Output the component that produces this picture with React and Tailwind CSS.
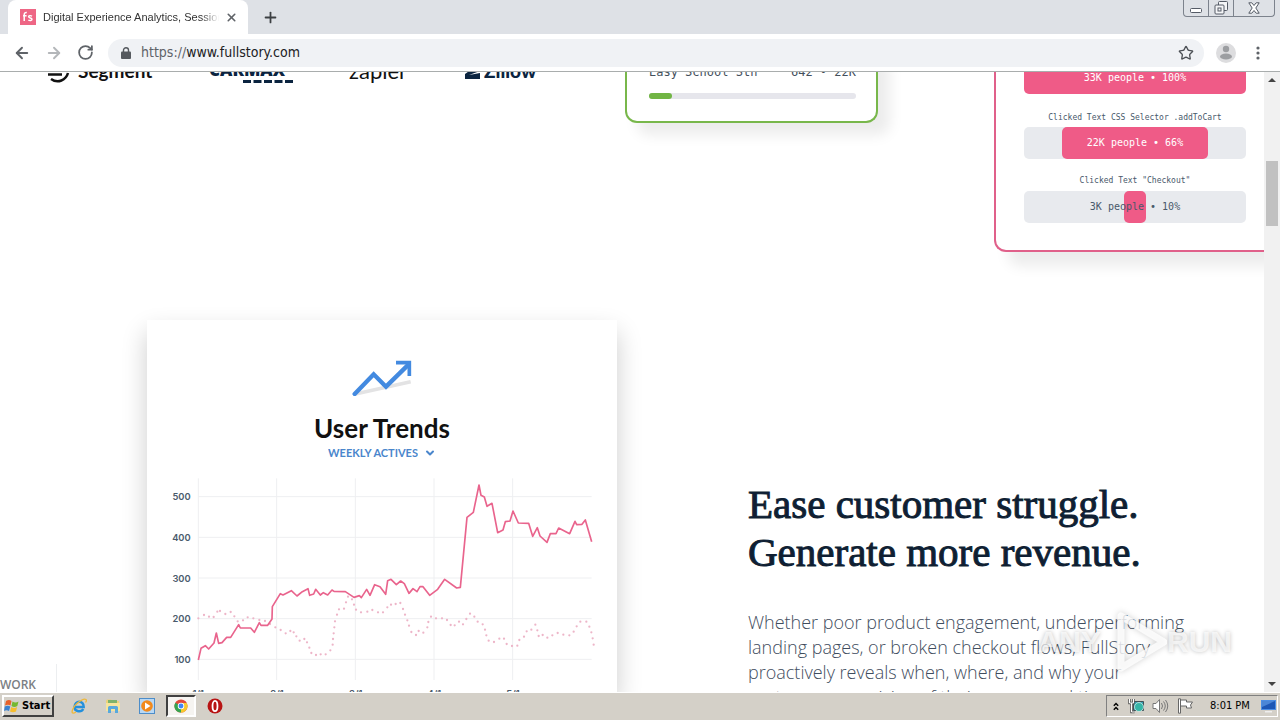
import React from "react";
import { ArrowLeft, ArrowRight, RotateCw, Star, X, Plus, ChevronDown } from "lucide-react";

const ui = "font-['DejaVu_Sans_Condensed','Noto_Sans',sans-serif]";

const trend =
  "145,570 153,535 166,527 176,537 192,519 199,489 206,520 216,518 230,502 242,502 266,464 271,474 302,474 313,487 328,458 333,466 353,466 366,447 367,410 391,371 399,375 424,362 441,378 457,365 474,356 479,376 491,372 497,358 511,375 520,368 533,375 546,360 552,364 586,365 612,382 628,377 634,383 650,358 660,376 674,344 690,350 707,373 713,332 723,328 739,344 752,333 763,341 777,370 789,356 801,365 810,350 819,350 839,376 863,358 884,328 920,354 931,352 951,142 970,127 987,45 993,76 1003,81 1011,109 1026,100 1043,188 1059,180 1066,155 1080,153 1089,123 1105,159 1136,160 1148,199 1162,173 1170,198 1191,217 1201,191 1218,191 1226,174 1259,191 1275,154 1280,164 1296,163 1306,150 1325,215";

const previous =
  "145,445 162,435 177,440 191,441 202,425 210,423 226,432 242,426 253,439 263,454 279,451 293,442 310,445 328,450 345,453 360,462 376,472 392,480 407,490 421,483 431,487 439,499 449,512 463,507 471,517 478,533 484,549 498,555 512,553 527,553 541,541 548,524 549,507 551,490 553,472 555,454 561,434 567,418 582,416 588,397 594,380 606,388 612,404 618,419 633,427 652,425 667,420 684,427 699,427 712,412 723,404 737,402 751,399 759,417 765,434 772,451 777,467 784,486 798,495 806,483 820,488 832,472 835,456 843,440 858,445 876,445 891,450 902,465 914,466 927,455 939,463 949,447 960,431 973,440 983,455 998,463 1005,479 1009,496 1016,512 1032,516 1048,506 1062,506 1070,522 1086,528 1102,527 1108,510 1122,500 1130,484 1144,479 1156,464 1162,481 1166,498 1178,495 1192,503 1207,496 1223,489 1240,494 1258,496 1271,485 1280,469 1291,455 1309,455 1318,470 1324,487 1328,505 1331,524"
    .split(" ")
    .map((p) => p.split(","));

function TabStrip() {
  return (
    <header className="flex h-[34px] shrink-0 items-stretch bg-[#dee1e6] pl-2 font-['Liberation_Sans',sans-serif]">
      <div className="flex w-60 items-center rounded-t-lg bg-white pl-3 pr-2.5">
        <svg viewBox="0 0 16 16" className="mr-[7px] size-4 shrink-0">
          <rect width="16" height="16" fill="#ee6685" />
          <path d="M4.200 12V6c0-1.800.8-2.600 2.600-2.500M3 6.800h3.600" stroke="#fff" strokeWidth="1.500" fill="none" />
          <path d="M12 7.200c-1.500-.9-3.400-.6-3.400.6 0 1.500 3.400.9 3.400 2.500 0 1.400-2.200 1.700-3.700.7" stroke="#fff" strokeWidth="1.400" fill="none" />
        </svg>
        <span className="min-w-0 flex-1 overflow-hidden whitespace-nowrap text-[11px] text-[#333] [mask-image:linear-gradient(to_right,black_90%,transparent)]">
          Digital Experience Analytics, Session
        </span>
        <button aria-label="Close tab" className="ml-1.5 text-[#5f6368]">
          <X size={13} strokeWidth={3} />
        </button>
      </div>
      <button aria-label="New tab" className="ml-3.5 text-[#3c4043]">
        <Plus size={17} strokeWidth={2.5} />
      </button>
      <div className="ml-auto mr-[5px] flex h-[17px] rounded-b-[4px] border border-t-0 border-[#7c828c] text-[#5c626c]">
        <button aria-label="Minimize" className="flex w-[25px] items-center justify-center border-r border-[#7c828c]">
          <svg viewBox="0 0 14 12" className="h-3 w-3.5" fill="#fff" stroke="#555b66"><rect x="1.500" y="6.500" width="11" height="4" rx="1" /></svg>
        </button>
        <button aria-label="Restore" className="flex w-[25px] items-center justify-center border-r border-[#7c828c]">
          <svg viewBox="0 0 14 14" className="size-3.5" fill="#f4f5f7" stroke="#555b66"><rect x="4.500" y=".5" width="9" height="9" rx="1" /><rect x="1" y="4" width="9" height="9" rx="1" /><rect x="4" y="7" width="3" height="3" /></svg>
        </button>
        <button aria-label="Close" className="flex w-10 items-center justify-center">
          <svg viewBox="0 0 12 12" className="size-3" fill="#fff" stroke="#555b66"><path d="M.8.8h3L6 3.500 8.200.8h3L7.800 6l3.400 5.200h-3L6 8.500l-2.200 2.700h-3L4.200 6z" /></svg>
        </button>
      </div>
    </header>
  );
}

function Toolbar() {
  return (
    <div className={`flex h-[38px] shrink-0 items-center border-b border-[#a9adad] bg-white pl-[13px] pr-4 ${ui}`}>
      <button aria-label="Back" className="mr-3.5 text-[#5f6368]"><ArrowLeft size={18} strokeWidth={2.5} /></button>
      <button aria-label="Forward" className="mr-3.5 text-[#b4b7ba]"><ArrowRight size={18} strokeWidth={2.5} /></button>
      <button aria-label="Reload" className="mr-3.5 text-[#5f6368]"><RotateCw size={17} strokeWidth={2.5} /></button>
      <label className="flex h-7 flex-1 items-center rounded-full bg-[#f0f2f5] pl-[13px] pr-2.5 text-[14px]">
        <svg viewBox="0 0 10 12" className="mr-2.5 h-3 w-2.5" fill="none"><rect y="4.500" width="10" height="7.500" rx="1" fill="#55595e" /><path d="M2.500 5V3a2.500 2.200 0 0 1 5 0v2" stroke="#55595e" strokeWidth="1.400" /></svg>
        <span className="text-[#5f6368]">https://</span>
        <input aria-label="Address" defaultValue="www.fullstory.com" className="min-w-0 flex-1 bg-transparent text-[#202124] outline-none" />
        <Star size={16} strokeWidth={2} className="text-[#4d5156]" />
      </label>
      <button aria-label="Profile" className="ml-3 mr-4">
        <svg viewBox="0 0 20 20" className="size-5"><circle cx="10" cy="10" r="10" fill="#dddddf" /><circle cx="10" cy="6" r="3.200" fill="#9c9ea1" /><ellipse cx="10" cy="13.500" rx="6" ry="3" fill="#9c9ea1" /></svg>
      </button>
      <button aria-label="Menu" className="text-[#5f6368]">
        <svg viewBox="0 0 12 16" className="h-4 w-3" fill="currentColor"><circle cx="6" cy="3" r="1.600" /><circle cx="6" cy="8" r="1.600" /><circle cx="6" cy="13" r="1.600" /></svg>
      </button>
    </div>
  );
}

function Logos() {
  return (
    <ul className="-mt-3.5 flex w-[625px] shrink-0 items-center pl-[46px] leading-6 text-[#111]">
      <li className="flex w-[163px] items-center gap-2 font-['Lato',sans-serif] text-[19px] font-bold">
        <svg viewBox="0 0 24 24" className="size-6" fill="none" stroke="#111" strokeWidth="2.500"><path d="M2 15.500h14M8 8.500h14M5 20c7 5 15 1 17-6M19 4C12-1 4 3 2 9.500" /></svg>
        Segment
      </li>
      <li className="flex w-[140px] flex-col font-['Open_Sans',sans-serif] text-[17px] font-extrabold text-[#0b2440]">
        CARMAX
        <svg viewBox="0 0 84 3" className="-mt-0.5 h-[3px] w-[84px]"><path d="M34 1.500h50" stroke="#0b2440" strokeWidth="3" strokeDasharray="8 2.500" /></svg>
      </li>
      <li className="w-[116px] font-['Lato',sans-serif] text-[22px]">zapier</li>
      <li className="flex items-center gap-1 font-['Lato',sans-serif] text-[19px] font-black text-[#0b2440]">
        <svg viewBox="0 0 15 18" className="h-[18px] w-[15px]"><path d="M0 6 7.500 0 15 6v3L4 13l11-2v6H0v-5l7-5-7 2z" fill="#0b2440" /></svg>
        Zillow
      </li>
    </ul>
  );
}

function GreenCard() {
  return (
    <article className="-mt-5 h-[71px] w-[253px] shrink-0 rounded-b-xl border-2 border-t-0 border-[#78b74b] bg-white pl-[22px] pr-5 pt-3 shadow-[12px_12px_14px_rgba(0,0,0,0.08)]">
      <p className="flex justify-between font-['DejaVu_Sans_Mono',monospace] text-[12px] leading-4 text-[#444f5c]">
        <span>Easy School Sth</span>
        <span>642 • 22K</span>
      </p>
      <div className="mt-[13px] h-1.5 rounded-sm bg-[#e6e6ec]">
        <div className="h-1.5 w-[11%] rounded-sm bg-[#71b544]" />
      </div>
    </article>
  );
}

function PinkCard() {
  return (
    <article className="-mt-4 ml-[116px] h-[196px] w-[282px] shrink-0 rounded-bl-xl border-b-2 border-l-2 border-[#e0608a] bg-white pl-7 font-['DejaVu_Sans_Mono',monospace] shadow-[14px_14px_14px_rgba(0,0,0,0.08)]">
      <div className="w-[222px] text-center text-[10px] leading-8">
        <p className="mt-1.5 h-8 rounded-[5px] bg-[#ef5b87] text-white">33K people • 100%</p>
        <p className="mt-4 text-[8px] leading-4 text-[#48596b]">Clicked Text CSS Selector .addToCart</p>
        <div className="mt-px flex justify-center rounded-[5px] bg-[#e8eaee]">
          <p className="h-8 w-[146px] rounded-[5px] bg-[#ef5b87] text-white">22K people • 66%</p>
        </div>
        <p className="mt-3.5 text-[8px] leading-4 text-[#48596b]">Clicked Text "Checkout"</p>
        <div className="mt-0.5 rounded-[5px] bg-[#e8eaee]">
          <p className="mx-auto flex h-8 w-[22px] justify-center whitespace-nowrap rounded-[5px] bg-[#ef5b87] text-[#48596b]">3K people • 10%</p>
        </div>
      </div>
    </article>
  );
}

function TrendsCard() {
  return (
    <article className="ml-[90px] flex w-[470px] shrink-0 flex-col items-center bg-white pt-10 font-['Lato',sans-serif] shadow-[0_12px_24px_rgba(0,0,0,0.2)]">
      <svg viewBox="636 150 180 108" className="h-9 w-[60px] shrink-0">
        <path d="M646 252 812 215" stroke="#e3e3e4" strokeWidth="11" />
        <path d="M644 252 701 193 738 230 806 163" fill="none" stroke="#438ae0" strokeWidth="13" strokeLinecap="round" />
        <path d="M768 158h40v40" fill="none" stroke="#438ae0" strokeWidth="11" />
      </svg>
      <h3 className="mt-4 text-[26px] font-bold leading-8 text-[#111]">User Trends</h3>
      <div className="flex h-[18px] shrink-0 items-center gap-1.5 text-[#4a86cc]">
        <select aria-label="Metric" className="appearance-none bg-transparent text-[11px] font-bold leading-4 [field-sizing:content]">
          <option>WEEKLY ACTIVES</option>
        </select>
        <ChevronDown size={12} strokeWidth={4} />
      </div>
      <svg viewBox="-9 0 1410 720" className="mt-2 h-60 w-[470px] shrink-0 overflow-visible font-['Inter',sans-serif]">
        <g stroke="#eeeff1" strokeWidth="3">
          {[145, 380, 616, 852, 1088].map((x) => <path key={x} d={`M${x} 25V630`} />)}
          {[80, 202, 324, 446, 568].map((y) => <path key={y} d={`M145 ${y}H1325`} />)}
        </g>
        <g fill="#4a5a6c" fontSize="28" fontWeight="600">
          {[500, 400, 300, 200, 100].map((n, i) => <text key={n} x="122" y={91 + i * 122} textAnchor="end">{n}</text>)}
          {["1/1", "2/1", "3/1", "4/1", "5/1"].map((t, i) => <text key={t} x={145 + i * 236} y="681" textAnchor="middle">{t}</text>)}
        </g>
        <g fill="#edb5c8">{previous.map(([x, y]) => <circle key={x + y} cx={x} cy={y} r="3.400" />)}</g>
        <polyline points={trend} fill="none" stroke="#e9648d" strokeWidth="5" strokeLinejoin="round" />
      </svg>
    </article>
  );
}

function Watermark() {
  return (
    <div className="pointer-events-none absolute bottom-5 right-12 flex items-center font-['Liberation_Sans',sans-serif] text-[30px] font-bold leading-none text-white/70 [text-shadow:0_0_4px_rgba(0,0,0,0.25)]">
      <span className="mr-4">ANY</span>
      <svg viewBox="0 0 50 60" className="h-[60px] w-[50px] drop-shadow-[0_0_3px_rgba(0,0,0,0.22)]"><path d="M4 4v52l43-26z" fill="none" stroke="#fff" strokeOpacity=".8" strokeWidth="7" strokeLinejoin="round" /></svg>
      <span>RUN</span>
    </div>
  );
}

function Scrollbar() {
  return (
    <div className="flex w-4 shrink-0 flex-col items-center bg-[#f1f1f1] py-1.5">
      <svg viewBox="0 0 8 4" className="h-1 w-2"><path d="M0 4 4 0l4 4z" fill="#444" /></svg>
      <div className="mt-[79px] h-[65px] w-3 bg-[#c1c1c1]" />
      <svg viewBox="0 0 8 4" className="mt-auto h-1 w-2"><path d="M0 0h8L4 4z" fill="#444" /></svg>
    </div>
  );
}

function Taskbar() {
  return (
    <footer className={`flex h-7 shrink-0 items-center bg-[#d4d0c8] pl-0.5 shadow-[inset_0_1px_0_#fff] ${ui}`}>
      <button className="flex h-[22px] w-[52px] items-center gap-0.5 border-2 border-b-[#404040] border-l-white border-r-[#404040] border-t-white text-[11px] font-bold text-black">
        <svg viewBox="0 0 16 16" className="size-4 shrink-0">
          <path d="M2 3q3-2 5.500 0L6.500 7.500Q4 6 1 7.500z" fill="#e8622b" />
          <path d="M8.500 3.500q3 2 6 0l-1.200 4.500q-3 1.800-5.800 0z" fill="#75b82f" />
          <path d="M.8 8.500q3-1.500 5.500 0L5 13Q2.500 11.500 0 13z" fill="#3c82d0" />
          <path d="M7.300 9q3 1.800 5.800 0L12 13.500q-3 1.500-6 0z" fill="#f6bd2c" />
        </svg>
        Start
      </button>
      <nav className="ml-2.5 flex items-center gap-1">
        <button aria-label="Internet Explorer" className="flex w-[30px] justify-center">
          <svg viewBox="0 0 16 16" className="size-4"><path d="M3.500 9h9.200c.3-7-9-7-9.200 0 0 5 7 5.500 8.700 2" fill="none" stroke="#2490dc" strokeWidth="2.500" /><path d="M1 14.500C1 8 12-.5 15 1.500c.8.500.3 1.800-.5 3M1 14.500c1 1 3 .2 4-.5" fill="none" stroke="#eeb83b" strokeWidth="1.300" /></svg>
        </button>
        <button aria-label="Explorer" className="flex w-[30px] justify-center">
          <svg viewBox="0 0 16 16" className="size-4"><path d="M1 3q0-1.500 1.500-1.500H6L7.500 3H14v10H1z" fill="#ecd27a" /><path d="M3 2h9v3H3z" fill="#7db36b" /><path d="M1 5h14v8H1z" fill="#f6e59d" /><path d="M3 15V9.500Q3 8 4.500 8h7Q13 8 13 9.500V15h-3v-4H6v4z" fill="#58a9dc" /></svg>
        </button>
        <button aria-label="Media Player" className="flex w-[30px] justify-center">
          <svg viewBox="0 0 16 16" className="size-4"><rect x=".5" y=".5" width="15" height="15" fill="#b9d8f4" stroke="#4d8dc9" /><circle cx="8" cy="8" r="5.800" fill="#f28a1c" /><path d="M6 4.500v7L11.500 8z" fill="#fff" /></svg>
        </button>
        <button aria-label="Chrome" className="flex h-[22px] w-[30px] items-center justify-center border-2 border-b-white border-l-[#404040] border-r-white border-t-[#404040] bg-[#f6f4f1]">
          <svg viewBox="0 0 16 16" className="size-3.5"><circle cx="8" cy="8" r="7.500" fill="#e3493a" /><path d="M8 8 1.500 4.200A7.500 7.500 0 0 0 8 15.500z" fill="#34a650" /><path d="M8 8 8 15.500A7.500 7.500 0 0 0 14.600 4.500H8z" fill="#f8c92d" /><circle cx="8" cy="8" r="3.700" fill="#fff" /><circle cx="8" cy="8" r="2.800" fill="#4285f4" /></svg>
        </button>
        <button aria-label="Opera" className="flex w-[30px] justify-center">
          <svg viewBox="0 0 16 16" className="size-4"><circle cx="8" cy="8" r="7.500" fill="#b81414" /><ellipse cx="8" cy="8" rx="2.500" ry="5.200" fill="#b81414" stroke="#fff" strokeWidth="1.800" /></svg>
        </button>
      </nav>
      <div className="ml-auto mr-0.5 flex h-[22px] w-[172px] items-center border border-b-white border-l-[#808080] border-r-white border-t-[#808080] pl-1.5 pr-px text-[11px] text-black">
        <svg viewBox="0 0 6 9" className="h-[9px] w-1.5" fill="none" stroke="#000" strokeWidth="1.400"><path d="M.8 3.800 3 1.500l2.200 2.300M.8 7.800 3 5.500l2.200 2.300" /></svg>
        <svg viewBox="0 0 17 16" className="ml-[9px] h-4 w-[17px]"><path d="M5.500 3.500h10v9h-10z" fill="#2e9fb0" stroke="#444f55" /><circle cx="11" cy="9" r="4.500" fill="#35b5a7" stroke="#eee" strokeWidth=".7" /><path d="M1.500 1v4h4V1M3.500 5v9h3" fill="none" stroke="#555" strokeWidth="2.500" /><path d="M1.500 1v4h4V1M3.500 5v9h3" fill="none" stroke="#fff" /></svg>
        <svg viewBox="0 0 17 16" className="ml-[7px] h-4 w-[17px]" fill="none" stroke="#777"><path d="M1 5.500h3l3.500-4v13L4 10.500H1z" fill="#fff" /><path d="M9.500 5q2 3 0 6M11.500 3.500q3.500 4.500 0 9M13.500 2q4.500 6 0 12" /></svg>
        <svg viewBox="0 0 17 16" className="ml-2 h-4 w-[17px]" fill="#fff" stroke="#666"><path d="M1.500.8h2v14.400h-2zM3.500 2h6v2h6l-2 3 1 3h-5V8h-6z" /></svg>
        <time className="ml-4 whitespace-nowrap">8:01 PM</time>
        <svg viewBox="0 0 15 14" className="ml-auto h-3.5 w-[15px]"><path d="M0 1h15v10H0z" fill="#4c8ee4" /><path d="M1 2h13v8H1z" fill="#1d57b5" /><path d="M1 2h13L1 8z" fill="#4b86d6" /><path d="M4 12h7v1.500H4z" fill="#eee" /></svg>
      </div>
    </footer>
  );
}

export default function App() {
  return (
    <div className="flex h-screen flex-col overflow-hidden bg-white">
      <TabStrip />
      <Toolbar />
      <div className="relative flex min-h-0 flex-1">
        <main className="flex min-w-0 flex-1 flex-col overflow-hidden">
          <section className="flex h-[248px] shrink-0 items-start">
            <Logos />
            <GreenCard />
            <PinkCard />
          </section>
          <section className="flex min-h-0 flex-1">
            <aside className="flex h-7 w-[57px] shrink-0 items-center justify-end self-end border-r border-[#eceef0] pr-5 pt-3.5 font-['Open_Sans',sans-serif] text-[12px] font-semibold text-[#7b7f84]">
              WORK
            </aside>
            <TrendsCard />
            <div className="ml-[131px] min-w-0 pt-40">
              <h2 className="whitespace-nowrap font-['Liberation_Serif',serif] text-[41px] leading-[48px] text-[#0f1f33] [-webkit-text-stroke:1px_#0f1f33]">
                Ease customer struggle.
                <br />
                Generate more revenue.
              </h2>
              <p className="mt-[34px] whitespace-nowrap font-['Open_Sans',sans-serif] text-[18px] font-light leading-[25px] text-[#3f4d5e]">
                Whether poor product engagement, underperforming
                <br />
                landing pages, or broken checkout flows, FullStory
                <br />
                proactively reveals when, where, and why your
                <br />
                customers are giving of their money and time.
              </p>
            </div>
          </section>
        </main>
        <Scrollbar />
        <Watermark />
      </div>
      <Taskbar />
    </div>
  );
}
